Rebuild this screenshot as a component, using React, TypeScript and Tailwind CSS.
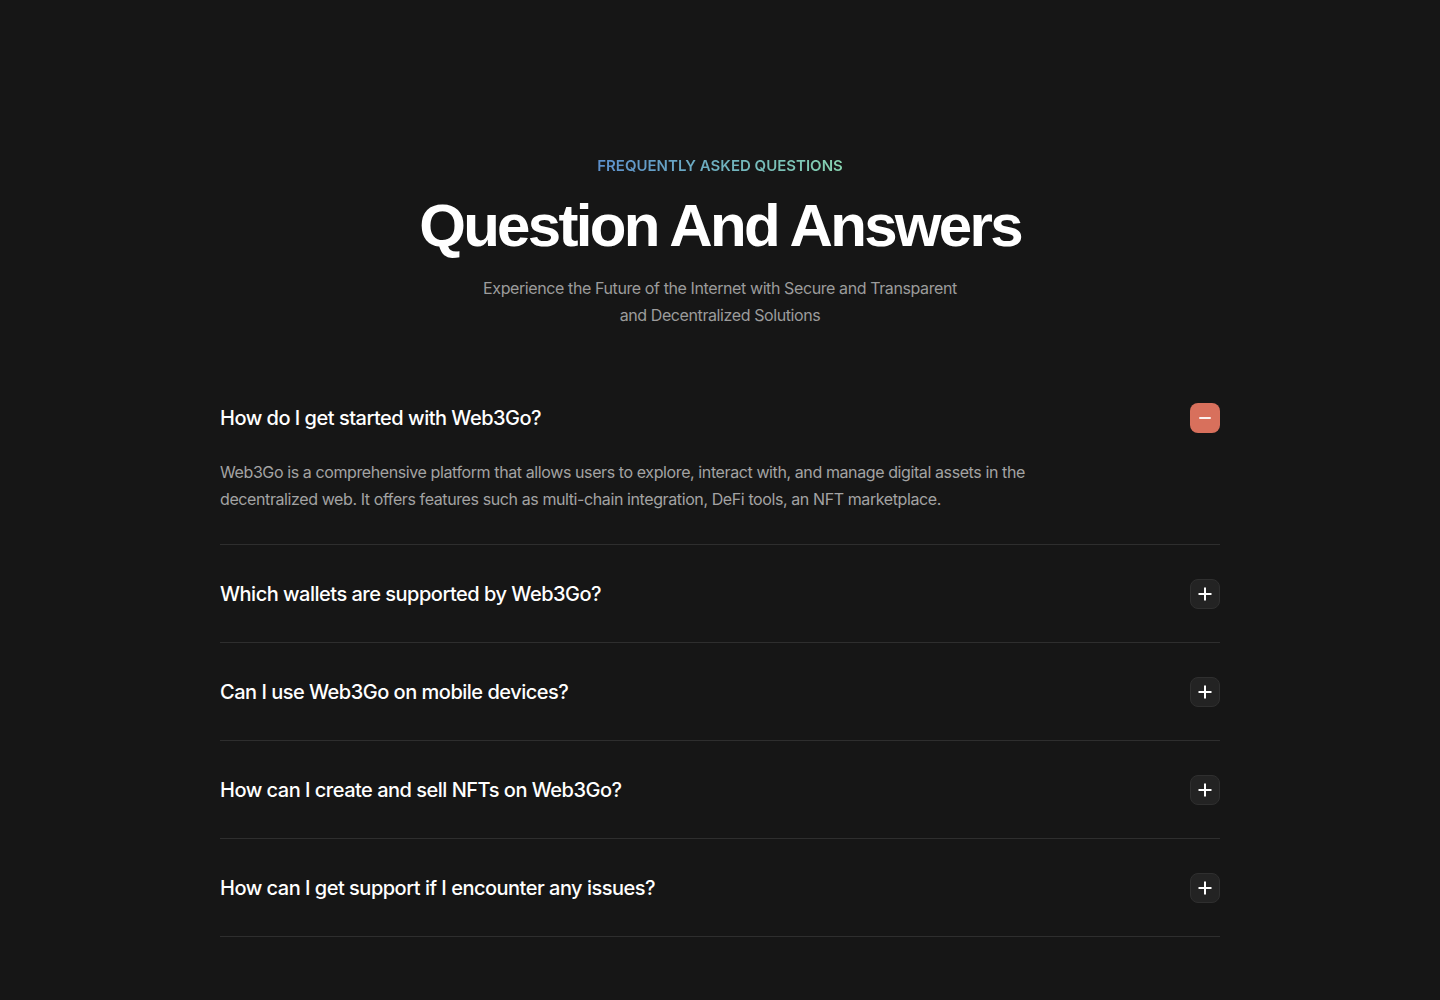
import React, { useState } from 'react';

interface FaqItem {
  question: string;
  answer: string;
}

const faqs: FaqItem[] = [
  {
    question: 'How do I get started with Web3Go?',
    answer:
      'Web3Go is a comprehensive platform that allows users to explore, interact with, and manage digital assets in the decentralized web. It offers features such as multi-chain integration, DeFi tools, an NFT marketplace.',
  },
  {
    question: 'Which wallets are supported by Web3Go?',
    answer: 'Web3Go supports MetaMask, WalletConnect, Coinbase Wallet and most popular browser and mobile wallets.',
  },
  {
    question: 'Can I use Web3Go on mobile devices?',
    answer: 'Yes, Web3Go is fully responsive and works on any modern mobile browser.',
  },
  {
    question: 'How can I create and sell NFTs on Web3Go?',
    answer: 'Connect your wallet, open the NFT marketplace and follow the minting steps to list your collection.',
  },
  {
    question: 'How can I get support if I encounter any issues?',
    answer: 'Reach out to our support team through the help center or join our community channels.',
  },
];

const FaqRow: React.FC<{ item: FaqItem; open: boolean; onToggle: () => void }> = ({ item, open, onToggle }) => {
  return (
    <div className="border-b border-[#2e2e2e]">
      <button onClick={onToggle} className="w-full flex items-center justify-between pt-[34px] pb-[33px] text-left">
        <span className="text-[20px] leading-[30px] font-medium text-white tracking-[-0.025em]">{item.question}</span>
        {open ? (
          <span className="w-[30px] h-[30px] rounded-lg bg-[#d8705c] flex items-center justify-center">
            <span className="block w-[12px] h-[2px] bg-white/90 rounded" />
          </span>
        ) : (
          <span className="w-[30px] h-[30px] rounded-lg bg-[#232323] border border-[#2f2f2f] flex items-center justify-center">
            <svg width="16" height="16" viewBox="0 0 16 16" fill="none">
              <path d="M8 1.5v13M1.5 8h13" stroke="white" strokeWidth="2" />
            </svg>
          </span>
        )}
      </button>
      {open && (
        <p className="-mt-[7px] pb-[31px] max-w-[820px] text-[16px] leading-[27px] text-[#a3a3a3] tracking-[-0.025em]">
          {item.answer}
        </p>
      )}
    </div>
  );
};

export default function App() {
  const [openIndex, setOpenIndex] = useState<number>(0);

  return (
    <div className="min-h-[1000px] bg-[#161616] font-['Inter',sans-serif]">
      <section className="max-w-[1000px] mx-auto pt-[156px] pb-[63px]">
        <div className="flex flex-col items-center text-center">
          <p className="text-[15px] leading-[20px] font-semibold tracking-[0em] bg-gradient-to-r from-[#5c8fcc] to-[#86d2ae] bg-clip-text text-transparent">
            FREQUENTLY ASKED QUESTIONS
          </p>
          <h1 className="mt-[14px] text-[60px] leading-[72px] font-semibold text-white tracking-[-0.045em] font-['Liberation_Sans',sans-serif]">
            Question And Answers
          </h1>
          <p className="mt-[13px] max-w-[500px] text-[16px] leading-[27px] text-[#9c9c9c] tracking-[-0.025em]">
            Experience the Future of the Internet with Secure and Transparent and Decentralized Solutions
          </p>
        </div>

        <div className="mt-[40px]">
          {faqs.map((item, i) => (
            <FaqRow key={i} item={item} open={openIndex === i} onToggle={() => setOpenIndex(openIndex === i ? -1 : i)} />
          ))}
        </div>
      </section>
    </div>
  );
}
